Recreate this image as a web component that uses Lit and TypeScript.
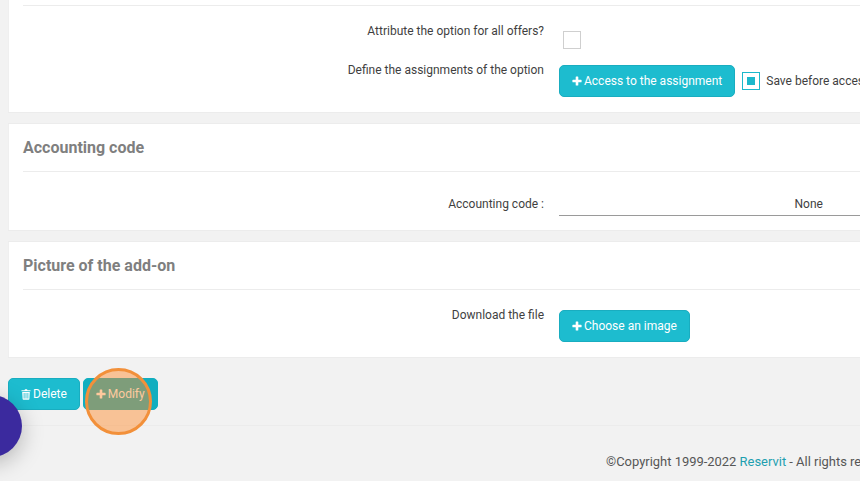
import { LitElement, html, css } from "lit";
import { customElement } from "lit/decorators.js";

const plus = html`<svg class="ic" viewBox="0 0 10 10" width="10" height="10"><path d="M3.7 1a.6.6 0 0 1 .6-.6h1.4a.6.6 0 0 1 .6.6v2.7H9a.6.6 0 0 1 .6.6v1.4a.6.6 0 0 1-.6.6H6.3V9a.6.6 0 0 1-.6.6H4.3a.6.6 0 0 1-.6-.6V6.3H1a.6.6 0 0 1-.6-.6V4.3a.6.6 0 0 1 .6-.6h2.7z" fill="currentColor"/></svg>`;
const trash = html`<svg class="ic" viewBox="0 0 10 11" width="10" height="11"><path d="M3.5 1.2 4 .2h2l.5 1h3v1.1H.5V1.2zM1.2 3h7.6l-.4 7.1a.8.8 0 0 1-.8.7H2.4a.8.8 0 0 1-.8-.7zm1.5 1v5.6h.8V4zm1.9 0v5.6h.8V4zm1.9 0v5.6h.8V4z" fill="currentColor" fill-rule="evenodd"/></svg>`;

@customElement("app-root")
export class AppRoot extends LitElement {
  static styles = css`
    :host {
      display: block;
      width: 860px;
      height: 481px;
      overflow: hidden;
      position: relative;
      background: #f2f2f2;
      font-family: Roboto, "Liberation Sans", sans-serif;
      font-size: 12px;
      color: #3f3f3f;
    }
    .page { width: 1000px; padding-left: 8px; box-sizing: border-box; }
    .card {
      background: #fff;
      box-shadow: inset 1px 0 0 #efefef, 0 -1px 0 #ececec, 0 1px 0 #ececec;
      padding: 0 15px;
      margin-bottom: 12px;
      box-sizing: border-box;
    }
    .c1 { height: 112px; padding-top: 5px; }
    .c2 { height: 106px; }
    .c3 { height: 115px; }
    .rule { border-top: 1px solid #ececec; }
    h2 {
      margin: 0;
      height: 47px;
      box-sizing: border-box;
      padding-top: 15px;
      font-size: 16px;
      line-height: 18px;
      font-weight: 700;
      color: #7f7f7f;
    }
    .row {
      display: grid;
      grid-template-columns: 521px 1fr;
      column-gap: 15px;
    }
    .label { text-align: right; line-height: 14px; }
    .ctl { display: flex; align-items: center; gap: 6px; }
    .r1 { padding-top: 18px; height: 39px; }
    .r1 .box { margin: 7px 0 0 4px; }
    .r2 .ctl { padding-top: 2px; }
    .r3 { padding-top: 24px; }
    .r3 .label { padding-top: 1px; }
    .r4 { padding-top: 18px; }
    .r4 .ctl { padding-top: 2px; }
    .box {
      width: 18px;
      height: 18px;
      box-sizing: border-box;
      border: 1px solid #cfcfcf;
      background: #fff;
      flex: none;
    }
    .box.on {
      border: 1px solid #1cb8cc;
      margin-left: 1px;
      display: flex;
      align-items: center;
      justify-content: center;
    }
    .box.on i { width: 8px; height: 8px; background: #1cb8cc; display: block; }
    .btn {
      display: inline-flex;
      align-items: center;
      gap: 2px;
      height: 32px;
      box-sizing: border-box;
      padding: 0 12px;
      border: 1px solid #19adc0;
      border-radius: 5px;
      background: #1dbccf;
      color: #fff;
      font: inherit;
      white-space: nowrap;
    }
    .btn.hover { background: #11aebf; border-color: #11aebf; }
    .ic { flex: none; }
    .select {
      width: 400px;
      height: 17px;
      padding: 3px 0 0 235.5px;
      border-bottom: 1px solid #9a9a9a;
      line-height: 13px;
      margin-top: -1px;
    }
    .actions { display: flex; gap: 3px; padding-top: 9px; height: 47px; }
    .footer {
      border-top: 1px solid #ececec;
      margin-left: 15px;
      padding: 28px 0 0 583px;
      white-space: nowrap;
      font-size: 12.95px;
      line-height: 15px;
      color: #565656;
    }
    .footer a { color: #1e9fb0; text-decoration: none; }
    .dot {
      position: absolute;
      left: -40px;
      top: 395px;
      width: 62px;
      height: 62px;
      border-radius: 50%;
      background: #3b2a9e;
      box-shadow: 0 6px 22px rgba(0, 0, 0, 0.25);
    }
    .spot {
      position: absolute;
      left: 85px;
      top: 368px;
      width: 67px;
      height: 67px;
      box-sizing: border-box;
      border-radius: 50%;
      border: 3px solid #f2903a;
      background: rgba(255, 138, 42, 0.46);
    }
  `;

  render() {
    return html`
      <div class="page">
        <section class="card c1">
          <div class="rule"></div>
          <div class="row r1">
            <div class="label">Attribute the option for all offers?</div>
            <div><div class="box"></div></div>
          </div>
          <div class="row r2">
            <div class="label">Define the assignments of the option</div>
            <div class="ctl">
              <button class="btn">${plus}Access to the assignment</button>
              <span class="box on"><i></i></span>
              <span>Save before accessing the assignment</span>
            </div>
          </div>
        </section>
        <section class="card c2">
          <h2>Accounting code</h2>
          <div class="rule"></div>
          <div class="row r3">
            <div class="label">Accounting code :</div>
            <div class="select">None</div>
          </div>
        </section>
        <section class="card c3">
          <h2>Picture of the add-on</h2>
          <div class="rule"></div>
          <div class="row r4">
            <div class="label">Download the file</div>
            <div class="ctl"><button class="btn">${plus}Choose an image</button></div>
          </div>
        </section>
        <div class="actions">
          <button class="btn">${trash}Delete</button>
          <button class="btn hover">${plus}Modify</button>
        </div>
        <div class="footer">©Copyright 1999-2022 <a>Reservit</a> - All rights reserved</div>
      </div>
      <div class="dot"></div>
      <div class="spot"></div>
    `;
  }
}
